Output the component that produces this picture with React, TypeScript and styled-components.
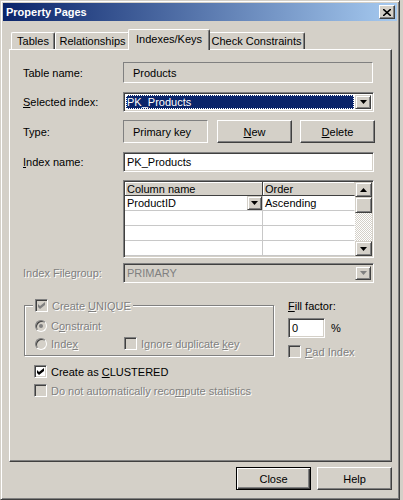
import React from 'react';
import styled, { createGlobalStyle } from 'styled-components';

const face = '#d4d0c8';
const shadow = '#808080';
const dark = '#404040';

const GlobalStyle = createGlobalStyle`
  body {
    margin: 0;
    background: ${face};
    font-family: "Liberation Sans", Arial, sans-serif;
    font-size: 11px;
    color: #000;
  }
`;

const Window = styled.div`
  width: 400px;
  height: 500px;
  box-sizing: border-box;
  background: ${face};
  border: 1px solid;
  border-color: ${face} ${dark} ${dark} ${face};
  box-shadow: inset 1px 1px #fff, inset -1px -1px ${shadow};
  padding: 2px;
  display: flex;
  flex-direction: column;
`;

const TitleBar = styled.div`
  height: 18px;
  display: flex;
  align-items: center;
  justify-content: space-between;
  padding: 0 2px 0 3px;
  background: linear-gradient(to right, #0a246a, #a6caf0);
  color: #fff;
  font-weight: bold;
  font-size: 11px;
`;

const TitleButton = styled.div`
  width: 16px;
  height: 14px;
  box-sizing: border-box;
  background: ${face};
  border: 1px solid;
  border-color: #fff ${dark} ${dark} #fff;
  box-shadow: inset -1px -1px ${shadow};
  display: flex;
  align-items: center;
  justify-content: center;
`;

const Body = styled.div`
  padding: 0 5px 0 6px;
  display: flex;
  flex-direction: column;
`;

const TabStrip = styled.div`
  margin-top: 8px;
  height: 20px;
  padding-left: 2px;
  display: flex;
  align-items: flex-end;
`;

const Tab = styled.div<{ $w: number; $active?: boolean }>`
  width: ${(p) => p.$w}px;
  height: ${(p) => (p.$active ? 21 : 17)}px;
  box-sizing: border-box;
  margin: ${(p) => (p.$active ? '0 -2px -1px -2px' : '0')};
  position: ${(p) => (p.$active ? 'relative' : 'static')};
  z-index: ${(p) => (p.$active ? 1 : 0)};
  background: ${face};
  border-top: 1px solid #fff;
  border-left: 1px solid #fff;
  border-right: 1px solid ${dark};
  border-radius: 2px 2px 0 0;
  box-shadow: inset -1px 0 ${shadow};
  display: flex;
  align-items: ${(p) => (p.$active ? 'flex-start' : 'center')};
  padding-top: ${(p) => (p.$active ? 3 : 0)}px;
  justify-content: center;
  white-space: nowrap;
`;

const Panel = styled.div`
  height: 413px;
  box-sizing: border-box;
  border: 1px solid;
  border-color: #fff ${dark} ${dark} #fff;
  box-shadow: inset -1px -1px ${shadow};
  padding: 12px 0 0 13px;
  display: flex;
  flex-direction: column;
`;

const Row = styled.div<{ $h: number; $top?: number }>`
  height: ${(p) => p.$h}px;
  margin-top: ${(p) => p.$top ?? 0}px;
  display: flex;
  align-items: center;
`;

const Label = styled.div<{ $disabled?: boolean }>`
  width: 100px;
  flex: none;
  white-space: nowrap;
  color: ${(p) => (p.$disabled ? shadow : '#000')};
  text-shadow: ${(p) => (p.$disabled ? '1px 1px 0 #fff' : 'none')};
`;

const Static = styled.div<{ $w: number }>`
  width: ${(p) => p.$w}px;
  height: 100%;
  box-sizing: border-box;
  border: 1px solid;
  border-color: ${shadow} #fff #fff ${shadow};
  padding-left: 9px;
  display: flex;
  align-items: center;
`;

const Field = styled.div<{ $w: number; $disabled?: boolean }>`
  width: ${(p) => p.$w}px;
  height: 100%;
  box-sizing: border-box;
  border: 1px solid;
  border-color: ${shadow} #fff #fff ${shadow};
  box-shadow: inset 1px 1px ${dark}, inset -1px -1px ${face};
  background: ${(p) => (p.$disabled ? face : '#fff')};
  padding: 2px;
  display: flex;
  align-items: center;
  gap: 1px;
`;

const FieldText = styled.div<{ $selected?: boolean; $disabled?: boolean }>`
  flex: 1;
  height: 100%;
  box-sizing: border-box;
  display: flex;
  align-items: center;
  padding-left: 1px;
  background: ${(p) => (p.$selected ? '#0a246a' : 'transparent')};
  color: ${(p) => (p.$selected ? '#fff' : p.$disabled ? shadow : '#000')};
  outline: ${(p) => (p.$selected ? '1px dotted #fff' : 'none')};
  outline-offset: -1px;
`;

const ArrowButton = styled.div<{ $w?: number }>`
  width: ${(p) => p.$w ?? 16}px;
  height: 100%;
  box-sizing: border-box;
  flex: none;
  background: ${face};
  border: 1px solid;
  border-color: ${face} ${dark} ${dark} ${face};
  box-shadow: inset 1px 1px #fff, inset -1px -1px ${shadow};
  display: flex;
  align-items: center;
  justify-content: center;
`;

const Button = styled.div<{ $default?: boolean }>`
  width: 75px;
  height: 23px;
  box-sizing: border-box;
  background: ${face};
  border: 1px solid;
  border-color: ${(p) => (p.$default ? '#000' : `#fff ${dark} ${dark} #fff`)};
  box-shadow: ${(p) =>
    p.$default
      ? `inset 1px 1px #fff, inset -1px -1px ${dark}, inset -2px -2px ${shadow}`
      : `inset -1px -1px ${shadow}`};
  display: flex;
  align-items: center;
  justify-content: center;
`;

const Grid = styled.div`
  width: 251px;
  height: 78px;
  box-sizing: border-box;
  margin-left: 100px;
  border: 1px solid;
  border-color: ${shadow} #fff #fff ${shadow};
  box-shadow: inset 1px 1px ${dark}, inset -1px -1px ${face};
  padding: 1px;
  background: #fff;
  display: flex;
`;

const GridBody = styled.div`
  display: grid;
  grid-template-columns: 138px 92px;
  grid-template-rows: 14px repeat(4, 15px);
`;

const HeadCell = styled.div<{ $last?: boolean }>`
  background: ${face};
  border-bottom: 1px solid ${dark};
  border-right: 1px solid ${(p) => (p.$last ? face : dark)};
  box-shadow: inset 1px 1px #fff;
  padding-left: 2px;
  display: flex;
  align-items: center;
`;

const Cell = styled.div<{ $first?: boolean }>`
  border-bottom: 1px solid #c8c8c8;
  border-right: 1px solid ${(p) => (p.$first ? '#c8c8c8' : '#fff')};
  padding-left: 2px;
  display: flex;
  align-items: center;
  justify-content: space-between;
`;

const ScrollBar = styled.div`
  width: 17px;
  display: flex;
  flex-direction: column;
`;

const ScrollPart = styled(ArrowButton)<{ $h: number }>`
  width: 100%;
  height: ${(p) => p.$h}px;
`;

const Track = styled.div`
  flex: 1;
  background: repeating-conic-gradient(#fff 0 25%, ${face} 0 50%) 0 0 / 2px 2px;
`;

const Bottom = styled.div`
  margin-top: 16px;
  display: flex;
`;

const LeftCol = styled.div`
  width: 251px;
  display: flex;
  flex-direction: column;
`;

const RightCol = styled.div`
  margin-left: 14px;
  display: flex;
  flex-direction: column;
`;

const GroupBox = styled.div`
  margin: 6px 0 0 1px;
  width: 250px;
  height: 51px;
  box-sizing: border-box;
  border: 1px solid ${shadow};
  box-shadow: inset 1px 1px #fff, 1px 1px #fff;
  display: flex;
  flex-direction: column;
`;

const Legend = styled.div`
  margin: -7px 0 0 8px;
  padding: 0 2px;
  align-self: flex-start;
  background: ${face};
`;

const Option = styled.div<{ $top?: number; $left?: number; $w?: number }>`
  margin-top: ${(p) => p.$top ?? 0}px;
  margin-left: ${(p) => p.$left ?? 0}px;
  width: ${(p) => (p.$w ? `${p.$w}px` : 'auto')};
  height: 13px;
  display: flex;
  align-items: center;
  gap: 4px;
  white-space: nowrap;
  flex: none;
`;

const OptionRow = styled.div`
  display: flex;
  margin-top: 5px;
`;

const Box = styled.div<{ $disabled?: boolean }>`
  width: 13px;
  height: 13px;
  box-sizing: border-box;
  flex: none;
  border: 1px solid;
  border-color: ${shadow} #fff #fff ${shadow};
  box-shadow: inset 1px 1px ${dark}, inset -1px -1px ${face};
  background: ${(p) => (p.$disabled ? face : '#fff')};
  display: flex;
  align-items: center;
  justify-content: center;
`;

const Radio = styled.div<{ $disabled?: boolean }>`
  width: 12px;
  height: 12px;
  box-sizing: border-box;
  flex: none;
  border-radius: 50%;
  border: 1px solid;
  border-color: ${shadow} #fff #fff ${shadow};
  box-shadow: inset 1px 1px ${dark};
  background: ${(p) => (p.$disabled ? face : '#fff')};
  display: flex;
  align-items: center;
  justify-content: center;
`;

const Dot = styled.div<{ $disabled?: boolean }>`
  width: 4px;
  height: 4px;
  border-radius: 50%;
  background: ${(p) => (p.$disabled ? shadow : '#000')};
`;

const Text = styled.span<{ $disabled?: boolean }>`
  color: ${(p) => (p.$disabled ? shadow : '#000')};
  text-shadow: ${(p) => (p.$disabled ? '1px 1px 0 #fff' : 'none')};
`;

const SmallInput = styled(Field)`
  height: 20px;
  padding-left: 3px;
`;

const FillRow = styled.div`
  margin-top: 6px;
  display: flex;
  align-items: center;
  gap: 6px;
`;

const ButtonRow = styled.div`
  margin-top: 5px;
  display: flex;
  justify-content: flex-end;
  gap: 6px;
`;

const Down = ({ color = '#000' }: { color?: string }) => (
  <svg width="7" height="4" viewBox="0 0 7 4">
    <path d="M0 0h7L3.5 4z" fill={color} />
  </svg>
);

const Up = () => (
  <svg width="7" height="4" viewBox="0 0 7 4">
    <path d="M0 4h7L3.5 0z" fill="#000" />
  </svg>
);

const Check = ({ color = '#000' }: { color?: string }) => (
  <svg width="7" height="7" viewBox="0 0 7 7">
    <path d="M0 2l2 2 5-4v3l-5 4-2-2z" fill={color} />
  </svg>
);

const App: React.FC = () => {
  return (
    <>
      <GlobalStyle />
      <Window>
        <TitleBar>
          <span>Property Pages</span>
          <TitleButton>
            <svg width="8" height="7" viewBox="0 0 8 7">
              <path d="M0 0l8 7M8 0L0 7" stroke="#000" strokeWidth="1.6" />
            </svg>
          </TitleButton>
        </TitleBar>
        <Body>
          <TabStrip>
            <Tab $w={44}>Tables</Tab>
            <Tab $w={75}>Relationships</Tab>
            <Tab $w={82} $active>Indexes/Keys</Tab>
            <Tab $w={97}>Check Constraints</Tab>
          </TabStrip>
          <Panel>
            <Row $h={21}>
              <Label>Table name:</Label>
              <Static $w={250}>Products</Static>
            </Row>
            <Row $h={20} $top={9}>
              <Label><u>S</u>elected index:</Label>
              <Field $w={251}>
                <FieldText $selected>PK_Products</FieldText>
                <ArrowButton><Down /></ArrowButton>
              </Field>
            </Row>
            <Row $h={23} $top={8}>
              <Label>Type:</Label>
              <Static $w={85}>Primary key</Static>
              <Row $h={23} style={{ gap: 8, marginLeft: 9 }}>
                <Button><span><u>N</u>ew</span></Button>
                <Button><span><u>D</u>elete</span></Button>
              </Row>
            </Row>
            <Row $h={20} $top={9}>
              <Label><u>I</u>ndex name:</Label>
              <Field $w={251}>
                <FieldText>PK_Products</FieldText>
              </Field>
            </Row>
            <Row $h={78} $top={8}>
              <Grid>
                <GridBody>
                  <HeadCell>Column name</HeadCell>
                  <HeadCell $last>Order</HeadCell>
                  <Cell $first>
                    ProductID
                    <ArrowButton $w={15}><Down /></ArrowButton>
                  </Cell>
                  <Cell>Ascending</Cell>
                  <Cell $first />
                  <Cell />
                  <Cell $first />
                  <Cell />
                  <Cell $first />
                  <Cell />
                </GridBody>
                <ScrollBar>
                  <ScrollPart $h={15}><Up /></ScrollPart>
                  <ScrollPart $h={16} />
                  <Track />
                  <ScrollPart $h={15}><Down /></ScrollPart>
                </ScrollBar>
              </Grid>
            </Row>
            <Row $h={20} $top={5}>
              <Label $disabled>Index Filegroup:</Label>
              <Field $w={251} $disabled>
                <FieldText $disabled>PRIMARY</FieldText>
                <ArrowButton><Down color={shadow} /></ArrowButton>
              </Field>
            </Row>
            <Bottom>
              <LeftCol>
                <GroupBox>
                  <Legend>
                    <Option>
                      <Box $disabled><Check color={shadow} /></Box>
                      <Text $disabled>Create <u>U</u>NIQUE</Text>
                    </Option>
                  </Legend>
                  <Option $top={7} $left={10}>
                    <Radio $disabled><Dot $disabled /></Radio>
                    <Text $disabled>C<u>o</u>nstraint</Text>
                  </Option>
                  <OptionRow>
                    <Option $left={10} $w={89}>
                      <Radio $disabled />
                      <Text $disabled>Inde<u>x</u></Text>
                    </Option>
                    <Option>
                      <Box $disabled />
                      <Text $disabled>Ignore duplicate <u>k</u>ey</Text>
                    </Option>
                  </OptionRow>
                </GroupBox>
                <Option $top={9} $left={11}>
                  <Box><Check /></Box>
                  <Text>Create as <u>C</u>LUSTERED</Text>
                </Option>
                <Option $top={6} $left={11}>
                  <Box $disabled />
                  <Text $disabled>Do not automatically reco<u>m</u>pute statistics</Text>
                </Option>
              </LeftCol>
              <RightCol>
                <Option>
                  <Text><u>F</u>ill factor:</Text>
                </Option>
                <FillRow>
                  <SmallInput $w={37}>0</SmallInput>
                  <Text>%</Text>
                </FillRow>
                <Option $top={7}>
                  <Box $disabled />
                  <Text $disabled><u>P</u>ad Index</Text>
                </Option>
              </RightCol>
            </Bottom>
          </Panel>
          <ButtonRow>
            <Button $default>Close</Button>
            <Button>Help</Button>
          </ButtonRow>
        </Body>
      </Window>
    </>
  );
};

export default App;
